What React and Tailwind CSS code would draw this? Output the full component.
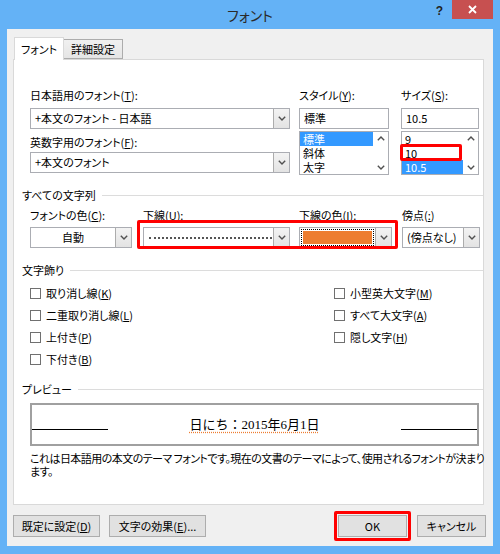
import React from 'react';

const ChevDown = ({ color = '#505050' }) => (
  <svg width="8" height="5" viewBox="0 0 8 5">
    <path d="M0.8 0.8L4 4L7.2 0.8" fill="none" stroke={color} strokeWidth="1.4" />
  </svg>
);

const ChevUp = ({ color = '#505050' }) => (
  <svg width="8" height="5" viewBox="0 0 8 5">
    <path d="M0.8 4.2L4 1L7.2 4.2" fill="none" stroke={color} strokeWidth="1.4" />
  </svg>
);

const ArrowBox = () => (
  <div className="w-[16px] h-full flex items-center justify-center border-l border-[#acacac] bg-gradient-to-b from-[#f3f3f3] to-[#e3e3e3]">
    <ChevDown />
  </div>
);

const Combo = ({ children, className = '' }) => (
  <div className={`flex h-[21px] border border-[#abadb3] bg-white ${className}`}>
    <div className="flex-1 flex items-center pl-[4px] overflow-hidden whitespace-nowrap">{children}</div>
    <ArrowBox />
  </div>
);

const SectionHeader = ({ title }) => (
  <div className="flex items-center h-[16px] pl-[8px]">
    <span>{title}</span>
    <div className="flex-1 h-px bg-[#dcdcdc] ml-[6px]" />
  </div>
);

const Check = ({ label, hotkey }) => (
  <div className="flex items-center h-[16px]">
    <div className="w-[11px] h-[11px] border border-[#707070] bg-white" />
    <span className="ml-[5px]">
      {label}(<span className="underline">{hotkey}</span>)
    </span>
  </div>
);

const ListBox = ({ items, selected, highlight }) => (
  <div className="relative flex h-[44px] border border-[#abadb3] bg-white">
    <div className="flex-1 flex flex-col">
      {items.map((it) => (
        <div
          key={it}
          className={`h-[14px] leading-[14px] pl-[3px] ${it === selected ? 'bg-[#3399ff] text-white' : ''}`}
        >
          {it}
        </div>
      ))}
    </div>
    <div className="w-[15px] flex flex-col items-center justify-between py-[4px]">
      <ChevUp />
      <ChevDown />
    </div>
    {highlight}
  </div>
);

const Button = ({ children, className = '' }) => (
  <div className={`h-[22px] flex items-center justify-center border border-[#adadad] bg-[#e1e1e1] ${className}`}>
    {children}
  </div>
);

export default function App() {
  return (
    <div className="w-[500px] h-[554px] bg-[#64b2f6] flex flex-col px-[7px] pb-[8px] text-[11px] text-black font-['Noto_Sans_CJK_JP',sans-serif] [font-feature-settings:'palt'] leading-none">
      {/* Title bar */}
      <div className="relative h-[29px] flex items-center justify-center">
        <span className="text-[14px] text-[#2a2a2a] mt-[1px]">フォント</span>
        <div className="absolute right-0 top-0 flex items-start">
          <span className="text-[12px] font-bold text-[#222] mt-[5px] mr-[9px] font-['Liberation_Sans',sans-serif]">?</span>
          <div className="w-[41px] h-[19px] bg-[#c75050] flex items-center justify-center">
            <svg width="9" height="9" viewBox="0 0 9 9">
              <path d="M1 1L8 8M8 1L1 8" stroke="#fff" strokeWidth="1.8" />
            </svg>
          </div>
        </div>
      </div>

      {/* Client */}
      <div className="flex-1 bg-[#f0f0f0] flex flex-col pt-[8px] pl-[6px] pr-[9px]">
        {/* Tabs */}
        <div className="flex items-end h-[23px] -mb-px ml-px relative z-10">
          <div className="h-[23px] w-[50px] bg-white border border-b-0 border-[#d9d9d9] flex items-center justify-center">
            フォント
          </div>
          <div className="h-[20px] w-[59px] mb-px bg-gradient-to-b from-[#f0f0f0] to-[#e5e5e5] border border-l-0 border-[#acacac] flex items-center justify-center">
            詳細設定
          </div>
        </div>

        {/* Panel */}
        <div className="h-[446px] bg-white border border-[#d9d9d9] pt-[27px]">
          {/* Fonts, style, size */}
          <div className="flex ml-[16px]">
            <div className="w-[260px] flex flex-col">
              <div className="h-[16px] flex items-center">
                日本語用のフォント(<span className="underline">T</span>):
              </div>
              <Combo className="mt-[5px]">+本文のフォント - 日本語</Combo>
              <div className="h-[16px] flex items-center mt-[5px]">
                英数字用のフォント(<span className="underline">F</span>):
              </div>
              <Combo className="mt-[2px]">+本文のフォント</Combo>
            </div>
            <div className="w-[90px] ml-[9px] flex flex-col">
              <div className="h-[16px] flex items-center">
                スタイル(<span className="underline">Y</span>):
              </div>
              <div className="h-[21px] mt-[5px] border border-[#abadb3] bg-white flex items-center pl-[4px]">標準</div>
              <div className="mt-[2px]">
                <ListBox items={['標準', '斜体', '太字']} selected="標準" />
              </div>
            </div>
            <div className="w-[78px] ml-[12px] flex flex-col">
              <div className="h-[16px] flex items-center">
                サイズ(<span className="underline">S</span>):
              </div>
              <div className="h-[21px] mt-[5px] border border-[#abadb3] bg-white flex items-center pl-[4px]">10.5</div>
              <div className="mt-[2px]">
                <ListBox
                  items={['9', '10', '10.5']}
                  selected="10.5"
                  highlight={
                    <div className="absolute left-[-2px] top-[12px] w-[62px] h-[17px] border-[3px] border-[#ff0000] rounded-[2px]" />
                  }
                />
              </div>
            </div>
          </div>

          {/* All text */}
          <div className="mt-[12px]">
            <SectionHeader title="すべての文字列" />
          </div>
          <div className="relative flex ml-[16px] mt-[4px]">
            <div className="w-[102px] flex flex-col">
              <div className="h-[16px] flex items-center">
                フォントの色(<span className="underline">C</span>):
              </div>
              <div className="flex h-[21px] mt-[4px] border border-[#abadb3] bg-white">
                <div className="flex-1 flex items-center justify-center">自動</div>
                <ArrowBox />
              </div>
            </div>
            <div className="w-[147px] ml-[11px] flex flex-col">
              <div className="h-[16px] flex items-center">
                下線(<span className="underline">U</span>):
              </div>
              <Combo className="mt-[4px]">
                <div className="w-[123px] border-t-2 border-dotted border-[#555] ml-[1px]" />
              </Combo>
            </div>
            <div className="w-[93px] ml-[9px] flex flex-col">
              <div className="h-[16px] flex items-center">
                下線の色(<span className="underline">I</span>):
              </div>
              <div className="flex h-[21px] mt-[4px] border border-[#abadb3] bg-white">
                <div className="flex-1 p-[1px]">
                  <div className="h-full border border-dotted border-black p-px">
                    <div className="h-full bg-[#ed7d31]" />
                  </div>
                </div>
                <ArrowBox />
              </div>
            </div>
            <div className="w-[78px] ml-[10px] flex flex-col">
              <div className="h-[16px] flex items-center">
                傍点(<span className="underline">:</span>)
              </div>
              <Combo className="mt-[4px]">(傍点なし)</Combo>
            </div>
            <div className="absolute left-[107px] top-[13px] w-[261px] h-[29px] border-[3px] border-[#ff0000] rounded-[2px]" />
          </div>

          {/* Effects */}
          <div className="mt-[14px]">
            <SectionHeader title="文字飾り" />
          </div>
          <div className="flex ml-[16px] mt-[7px]">
            <div className="w-[304px] flex flex-col gap-[6px]">
              <Check label="取り消し線" hotkey="K" />
              <Check label="二重取り消し線" hotkey="L" />
              <Check label="上付き" hotkey="P" />
              <Check label="下付き" hotkey="B" />
            </div>
            <div className="flex flex-col gap-[6px]">
              <Check label="小型英大文字" hotkey="M" />
              <Check label="すべて大文字" hotkey="A" />
              <Check label="隠し文字" hotkey="H" />
            </div>
          </div>

          {/* Preview */}
          <div className="mt-[14px]">
            <SectionHeader title="プレビュー" />
          </div>
          <div className="ml-[16px] mt-[6px] w-[449px] h-[43px] border-2 border-[#a0a0a0] flex items-center justify-between">
            <div className="w-[76px] h-px bg-black mt-[10px]" />
            <span className="text-[13px] [font-feature-settings:normal] font-['Liberation_Serif','Noto_Sans_CJK_JP',serif] underline decoration-dotted decoration-[#ed7d31] underline-offset-[3px]">
              日にち：2015年6月1日
            </span>
            <div className="w-[76px] h-px bg-black mt-[10px]" />
          </div>
          <div className="ml-[16px] mt-[6px] leading-[13px] whitespace-nowrap tracking-[-0.55px]">
            これは日本語用の本文のテーマ フォントです。現在の文書のテーマによって、使用されるフォントが決まり
            <br />
            ます。
          </div>
        </div>

        {/* Buttons */}
        <div className="flex items-center mt-[6px]">
          <Button className="w-[87px]">
            既定に設定(<span className="underline">D</span>)
          </Button>
          <Button className="w-[97px] ml-[9px]">
            文字の効果(<span className="underline">E</span>)...
          </Button>
          <div className="flex-1" />
          <div className="border-[3px] border-[#ff0000] rounded-[2px] p-px">
            <Button className="w-[69px]">OK</Button>
          </div>
          <Button className="w-[69px] ml-[6px] mr-[-2px]">キャンセル</Button>
        </div>
      </div>
    </div>
  );
}
